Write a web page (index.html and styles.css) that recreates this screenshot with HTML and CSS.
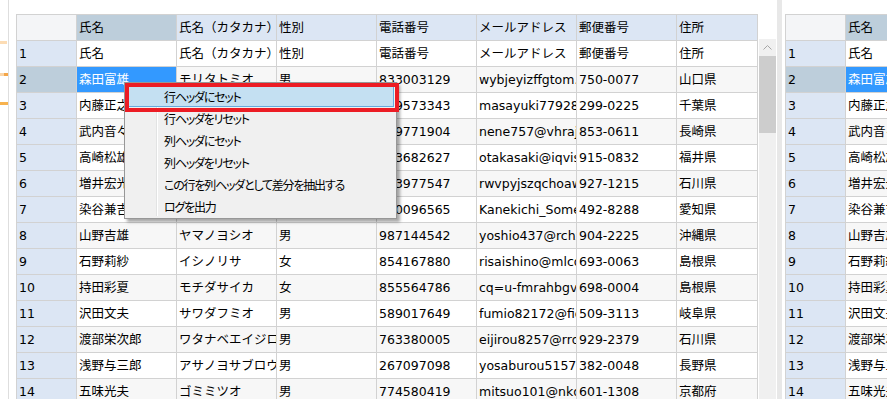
FILE: index.html
```html
<!DOCTYPE html>
<html lang="ja">
<head>
    <meta charset="UTF-8">
    <title>差分抽出ビュー</title>
    <link rel="stylesheet" href="styles.css">
</head>
<body>
<div class="app">

    <!-- left strip -->
    <div class="edge">
        <span class="mark mark-1"></span>
        <span class="mark mark-2"></span>
        <span class="mark mark-3"></span>
    </div>

    <!-- main grid -->
    <div class="sheet">
        <div class="grid">
            <div class="row">
                <div class="corner"></div>
                <div class="ch sel">氏名</div>
                <div class="ch">氏名（カタカナ）</div>
                <div class="ch">性別</div>
                <div class="ch">電話番号</div>
                <div class="ch">メールアドレス</div>
                <div class="ch">郵便番号</div>
                <div class="ch">住所</div>
            </div>
            <div class="row">
                <div class="rh">1</div>
                <div class="c">氏名</div><div class="c">氏名（カタカナ）</div><div class="c">性別</div><div class="c">電話番号</div><div class="c">メールアドレス</div><div class="c">郵便番号</div><div class="c">住所</div>
            </div>
            <div class="row alt">
                <div class="rh sel">2</div>
                <div class="c sel">森田富雄</div><div class="c">モリタトミオ</div><div class="c">男</div><div class="c">833003129</div><div class="c">wybjeyizffgtom.r@fgq.ne.jp</div><div class="c">750-0077</div><div class="c">山口県</div>
            </div>
            <div class="row">
                <div class="rh">3</div>
                <div class="c">内藤正之</div><div class="c">ナイトウマサユキ</div><div class="c">男</div><div class="c">829573343</div><div class="c">masayuki77928@ebq.jp</div><div class="c">299-0225</div><div class="c">千葉県</div>
            </div>
            <div class="row alt">
                <div class="rh">4</div>
                <div class="c">武内音々</div><div class="c">タケウチネネ</div><div class="c">女</div><div class="c">849771904</div><div class="c">nene757@vhrajx.com</div><div class="c">853-0611</div><div class="c">長崎県</div>
            </div>
            <div class="row">
                <div class="rh">5</div>
                <div class="c">高崎松雄</div><div class="c">タカサキマツオ</div><div class="c">男</div><div class="c">283682627</div><div class="c">otakasaki@iqvis.jp</div><div class="c">915-0832</div><div class="c">福井県</div>
            </div>
            <div class="row alt">
                <div class="rh">6</div>
                <div class="c">増井宏光</div><div class="c">マスイヒロミツ</div><div class="c">男</div><div class="c">523977547</div><div class="c">rwvpyjszqchoaw@xu.jp</div><div class="c">927-1215</div><div class="c">石川県</div>
            </div>
            <div class="row">
                <div class="rh">7</div>
                <div class="c">染谷兼吉</div><div class="c">ソメヤカネキチ</div><div class="c">男</div><div class="c">270096565</div><div class="c">Kanekichi_Someya@ab.jp</div><div class="c">492-8288</div><div class="c">愛知県</div>
            </div>
            <div class="row alt">
                <div class="rh">8</div>
                <div class="c">山野吉雄</div><div class="c">ヤマノヨシオ</div><div class="c">男</div><div class="c">987144542</div><div class="c">yoshio437@rchx.jp</div><div class="c">904-2225</div><div class="c">沖縄県</div>
            </div>
            <div class="row">
                <div class="rh">9</div>
                <div class="c">石野莉紗</div><div class="c">イシノリサ</div><div class="c">女</div><div class="c">854167880</div><div class="c">risaishino@mlcq.jp</div><div class="c">693-0063</div><div class="c">島根県</div>
            </div>
            <div class="row alt">
                <div class="rh">10</div>
                <div class="c">持田彩夏</div><div class="c">モチダサイカ</div><div class="c">女</div><div class="c">855564786</div><div class="c">cq=u-fmrahbgvw@ne.jp</div><div class="c">698-0004</div><div class="c">島根県</div>
            </div>
            <div class="row">
                <div class="rh">11</div>
                <div class="c">沢田文夫</div><div class="c">サワダフミオ</div><div class="c">男</div><div class="c">589017649</div><div class="c">fumio82172@fiqz.jp</div><div class="c">509-3113</div><div class="c">岐阜県</div>
            </div>
            <div class="row alt">
                <div class="rh">12</div>
                <div class="c">渡部栄次郎</div><div class="c">ワタナベエイジロウ</div><div class="c">男</div><div class="c">763380005</div><div class="c">eijirou8257@rrqx.jp</div><div class="c">929-2379</div><div class="c">石川県</div>
            </div>
            <div class="row">
                <div class="rh">13</div>
                <div class="c">浅野与三郎</div><div class="c">アサノヨサブロウ</div><div class="c">男</div><div class="c">267097098</div><div class="c">yosaburou51573@kj.jp</div><div class="c">382-0048</div><div class="c">長野県</div>
            </div>
            <div class="row alt">
                <div class="rh">14</div>
                <div class="c">五味光夫</div><div class="c">ゴミミツオ</div><div class="c">男</div><div class="c">774580419</div><div class="c">mitsuo101@nkq.jp</div><div class="c">601-1308</div><div class="c">京都府</div>
            </div>
        </div>
    </div>

    <div class="vscroll">
        <div class="vs-btn">
            <svg width="9" height="5" viewBox="0 0 9 5"><polyline points="0.5,4.5 4.5,0.5 8.5,4.5" fill="none" stroke="#a6a6a6" stroke-width="1"/></svg>
        </div>
        <div class="vs-thumb"></div>
    </div>

    <div class="splitter"></div>

    <!-- second grid (compare view) -->
    <div class="sheet sheet-right">
        <div class="grid grid-narrow">
            <div class="row"><div class="corner"></div><div class="ch sel">氏名</div></div>
            <div class="row"><div class="rh">1</div><div class="c">氏名</div></div>
            <div class="row alt"><div class="rh sel">2</div><div class="c sel">森田富雄</div></div>
            <div class="row"><div class="rh">3</div><div class="c">内藤正之</div></div>
            <div class="row alt"><div class="rh">4</div><div class="c">武内音々</div></div>
            <div class="row"><div class="rh">5</div><div class="c">高崎松雄</div></div>
            <div class="row alt"><div class="rh">6</div><div class="c">増井宏光</div></div>
            <div class="row"><div class="rh">7</div><div class="c">染谷兼吉</div></div>
            <div class="row alt"><div class="rh">8</div><div class="c">山野吉雄</div></div>
            <div class="row"><div class="rh">9</div><div class="c">石野莉紗</div></div>
            <div class="row alt"><div class="rh">10</div><div class="c">持田彩夏</div></div>
            <div class="row"><div class="rh">11</div><div class="c">沢田文夫</div></div>
            <div class="row alt"><div class="rh">12</div><div class="c">渡部栄次郎</div></div>
            <div class="row"><div class="rh">13</div><div class="c">浅野与三郎</div></div>
            <div class="row alt"><div class="rh">14</div><div class="c">五味光夫</div></div>
        </div>
    </div>

    <!-- Context Menu -->
    <div class="menu">
        <div class="menu-item active">行ヘッダにセット</div>
        <div class="menu-item">行ヘッダをリセット</div>
        <div class="menu-item">列ヘッダにセット</div>
        <div class="menu-item">列ヘッダをリセット</div>
        <div class="menu-item">この行を列ヘッダとして差分を抽出する</div>
        <div class="menu-item">ログを出力</div>
    </div>

    <!-- annotation -->
    <div class="callout"></div>
</div>
</body>
</html>
```

FILE: styles.css
```css
/* Base */
html, body {
    margin: 0;
    padding: 0;
    background: #fff;
}

body {
    width: 887px;
    height: 399px;
    overflow: hidden;
    font-family: "DejaVu Sans", "Noto Sans CJK JP", sans-serif;
    font-size: 12.5px;
    color: #000;
}

.app {
    position: relative;
    display: flex;
    align-items: flex-start;
    height: 399px;
    overflow: hidden;
}

/* Left strip */
.edge {
    width: 8px;
    height: 399px;
    border-right: 1px solid #dedede;
    display: flex;
    flex-direction: column;
    flex-shrink: 0;
}

.mark {
    display: block;
    height: 3px;
    width: 7px;
}

.mark-1 {
    margin-top: 41px;
    background: #fcdcb4;
}

.mark-2 {
    margin-top: 29px;
    width: 8px;
    background: linear-gradient(90deg, #fbd6a8 0 4px, #f4a64a 4px);
}

.mark-3 {
    margin-top: 26px;
    width: 8px;
    background: #f7b24e;
}

/* Grid */
.sheet {
    width: 740px;
    height: 385px;
    margin: 14px 0 0 7px;
    border-left: 1px solid #d2d2d2;
    border-right: 1px solid #d2d2d2;
    border-top: 1px solid #d2d2d2;
    overflow: hidden;
    flex-shrink: 0;
}

.grid {
    display: grid;
    grid-template-columns: 60px repeat(7, 100px);
    grid-auto-rows: 26px;
    width: 760px;
}

.grid-narrow {
    grid-template-columns: 60px 100px;
    width: 160px;
}

.row {
    display: contents;
}

.grid > .row > div {
    box-sizing: border-box;
    border-right: 1px solid #d2d2d2;
    border-bottom: 1px solid #d2d2d2;
    line-height: 25px;
    padding: 0 2px;
    white-space: nowrap;
    overflow: hidden;
}

.corner {
    background: #f4f5f7;
}

.ch {
    background: #dce6f4;
}

.rh {
    background: #dce6f4;
}

.ch.sel,
.rh.sel {
    background: #bdcedb;
}

.c {
    background: #fff;
}

.row.alt > .c {
    background: #f7f7f7;
}

.row > .c.sel {
    background: #3399ff;
    color: #fff;
}

/* Vertical scrollbar */
.vscroll {
    width: 17px;
    height: 360px;
    margin: 39px 0 0 1px;
    background: #f0f0f0;
    flex-shrink: 0;
    display: flex;
    flex-direction: column;
}

.vs-btn {
    height: 17px;
    display: flex;
    justify-content: center;
    align-items: center;
}

.vs-btn svg {
    display: block;
    margin-top: -1px;
}

.vs-thumb {
    height: 77px;
    background: #cdcdcd;
}

/* Splitter between the two views */
.splitter {
    width: 5px;
    height: 399px;
    margin: 0 3px 0 1px;
    background: #e8e8e8;
    flex-shrink: 0;
}

.sheet-right {
    width: 101px;
    margin-left: 0;
    border-right: none;
}

/* Context menu */
.menu {
    position: absolute;
    left: 124px;
    top: 82px;
    width: 271px;
    padding: 2px 0 1px;
    background: #f0f0f0;
    border: 1px solid #979797;
    box-shadow: 3px 3px 3px rgba(0, 0, 0, 0.35);
    font-family: "Noto Sans CJK JP", sans-serif;
    font-size: 12px;
    letter-spacing: -1.2px;
    font-feature-settings: "palt";
}

.menu::before {
    content: "";
    position: absolute;
    left: 31px;
    top: 2px;
    bottom: 2px;
    width: 1px;
    background: #e2e3e3;
    border-right: 1px solid #fff;
}

.menu-item {
    position: relative;
    height: 22px;
    line-height: 22px;
    margin: 0 2px 0 3px;
    padding-left: 35px;
    border: 1px solid transparent;
    box-sizing: border-box;
    white-space: nowrap;
}

.menu-item.active {
    background: #c4e0f2;
    border-color: #66aadd;
}

/* Red annotation frame */
.callout {
    position: absolute;
    left: 125px;
    top: 83px;
    width: 274px;
    height: 29px;
    box-sizing: border-box;
    border: 4px solid #ec1c24;
}
```
